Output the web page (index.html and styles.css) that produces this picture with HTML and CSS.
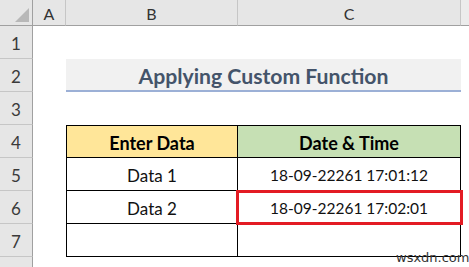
FILE: index.html
```html
<!DOCTYPE html>
<html>
<head>
<meta charset="utf-8">
<link rel="stylesheet" href="styles.css">
</head>
<body>
<div class="sheet">
  <div class="corner"><span class="tri"></span></div>
  <div class="colhdr">A</div>
  <div class="colhdr">B</div>
  <div class="colhdr">C</div>
  <div class="colhdr rest"></div>

  <div class="rowhdr r1">1</div>
  <div class="rowhdr r2">2</div>
  <div class="rowhdr r3">3</div>
  <div class="rowhdr r4">4</div>
  <div class="rowhdr r5">5</div>
  <div class="rowhdr r6">6</div>
  <div class="rowhdr r7">7</div>
  <div class="rowhdr r8"></div>

  <div class="title">Applying Custom Function</div>

  <div class="tcell th first b r4">Enter Data</div>
  <div class="tcell th c r4 green">Date &amp; Time</div>
  <div class="tcell first b r5">Data 1</div>
  <div class="tcell c r5 num">18-09-22261 17:01:12</div>
  <div class="tcell first b r6">Data 2</div>
  <div class="tcell c r6 num">18-09-22261 17:02:01</div>
  <div class="tcell first b r7"></div>
  <div class="tcell c r7"></div>

  <div class="highlight"></div>
  <div class="watermark">wsxdn.com</div>
</div>
</body>
</html>
```
FILE: styles.css
```css
html, body {
  margin: 0;
  padding: 0;
  background: #fff;
}
body {
  width: 469px;
  height: 267px;
  overflow: hidden;
  font-family: Lato, "Open Sans", sans-serif;
}
.sheet {
  position: relative;
  display: grid;
  grid-template-columns: 33px 33px 172px 223px 8px;
  grid-template-rows: 26px repeat(7, 33px) 10px;
  width: 469px;
  height: 267px;
}
.corner {
  grid-row: 1;
  grid-column: 1;
  background: #e6e6e6;
  border-bottom: 1px solid #a0a0a0;
  border-right: 1px solid #a0a0a0;
  box-sizing: border-box;
  position: relative;
}
.tri {
  position: absolute;
  right: 3px;
  bottom: 3px;
  width: 0;
  height: 0;
  border-left: 14px solid transparent;
  border-bottom: 14px solid #b8b8b8;
}
.colhdr {
  grid-row: 1;
  background: #e6e6e6;
  border-bottom: 1px solid #a0a0a0;
  border-right: 1px solid #c6c6c6;
  box-sizing: border-box;
  display: flex;
  align-items: center;
  justify-content: center;
  font-size: 16px;
  color: #333;
  padding-top: 1px;
}
.colhdr.rest {
  background: #ececec;
  border-right: none;
}
.rowhdr {
  grid-column: 1;
  background: #e6e6e6;
  border-right: 1px solid #a0a0a0;
  border-bottom: 1px solid #c6c6c6;
  box-sizing: border-box;
  display: flex;
  align-items: center;
  justify-content: center;
  font-size: 17px;
  color: #3a3a3a;
  padding-top: 2px;
}
.rowhdr.r8 { border-bottom: none; }
.r1 { grid-row: 2; }
.r2 { grid-row: 3; }
.r3 { grid-row: 4; }
.r4 { grid-row: 5; }
.r5 { grid-row: 6; }
.r6 { grid-row: 7; }
.r7 { grid-row: 8; }
.r8 { grid-row: 9; }

.title {
  grid-row: 3;
  grid-column: 3 / 5;
  background: #f1f1f1;
  border-bottom: 2px solid #9cb0d6;
  box-sizing: border-box;
  display: flex;
  align-items: center;
  justify-content: center;
  font-size: 21.2px;
  font-weight: 700;
  color: #44546a;
  padding-top: 2px;
}

.tcell {
  box-sizing: border-box;
  border-right: 1px solid #000;
  border-bottom: 1px solid #000;
  display: flex;
  align-items: center;
  justify-content: center;
  font-size: 17px;
  color: #111;
  padding-top: 2px;
}
.tcell.num { font-size: 15.5px; }
.tcell.b { grid-column: 3; }
.tcell.c { grid-column: 4; }
.tcell.first { border-left: 1px solid #000; }
.tcell.th {
  border-top: 1px solid #000;
  background: #ffe699;
  font-weight: 700;
  color: #000;
  font-size: 18px;
}
.tcell.th.green { background: #c6e0b4; }

.highlight {
  position: absolute;
  left: 236px;
  top: 190px;
  width: 227px;
  height: 35px;
  box-sizing: border-box;
  border: 3px solid #e31b23;
}
.watermark {
  position: absolute;
  left: 396px;
  top: 250px;
  font-family: "DejaVu Sans", sans-serif;
  font-size: 13px;
  color: #333;
}
```
